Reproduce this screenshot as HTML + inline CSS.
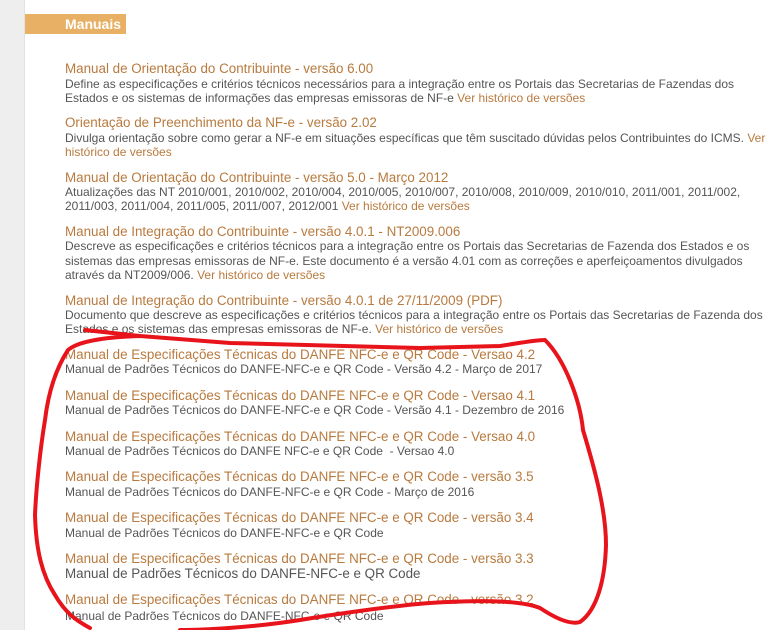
<!DOCTYPE html>
<html><head><meta charset="utf-8"><style>
body{margin:0;width:774px;height:630px;overflow:hidden;background:#fff;font-family:"Liberation Sans",Arial,sans-serif;position:relative}
.strip{position:absolute;left:0;top:0;width:24px;height:630px;background:#eeeeee;border-right:1px solid #e2e2e2}
.hdr{position:absolute;left:25px;top:14px;width:101px;height:20px;background:#e8b064;color:#fff;font-weight:bold;font-size:14px;line-height:20px;text-indent:40px}
.l{position:absolute;left:65px;white-space:nowrap;line-height:14px}
.t{font-size:13.4px;color:#b87a3e}
.d{font-size:12px;color:#555}
.d a,.a{color:#b87a3e}
</style></head><body>
<div class="strip"></div>
<div class="hdr">Manuais</div>
<div class="l t" style="top:62px">Manual de Orientação do Contribuinte - versão 6.00</div>
<div class="l d" style="top:77px">Define as especificações e critérios técnicos necessários para a integração entre os Portais das Secretarias de Fazendas dos</div>
<div class="l d" style="top:91px">Estados e os sistemas de informações das empresas emissoras de NF-e <a>Ver histórico de versões</a></div>

<div class="l t" style="top:116px">Orientação de Preenchimento da NF-e - versão 2.02</div>
<div class="l d" style="top:131px">Divulga orientação sobre como gerar a NF-e em situações específicas que têm suscitado dúvidas pelos Contribuintes do ICMS. <a>Ver</a></div>
<div class="l d" style="top:145px"><a>histórico de versões</a></div>

<div class="l t" style="top:171px">Manual de Orientação do Contribuinte - versão 5.0 - Março 2012</div>
<div class="l d" style="top:185px">Atualizações das NT 2010/001, 2010/002, 2010/004, 2010/005, 2010/007, 2010/008, 2010/009, 2010/010, 2011/001, 2011/002,</div>
<div class="l d" style="top:199px">2011/003, 2011/004, 2011/005, 2011/007, 2012/001 <a>Ver histórico de versões</a></div>

<div class="l t" style="top:225px">Manual de Integração do Contribuinte - versão 4.0.1 - NT2009.006</div>
<div class="l d" style="top:239px">Descreve as especificações e critérios técnicos para a integração entre os Portais das Secretarias de Fazenda dos Estados e os</div>
<div class="l d" style="top:254px">sistemas das empresas emissoras de NF-e. Este documento é a versão 4.01 com as correções e aperfeiçoamentos divulgados</div>
<div class="l d" style="top:268px">através da NT2009/006. <a>Ver histórico de versões</a></div>

<div class="l t" style="top:294px">Manual de Integração do Contribuinte - versão 4.0.1 de 27/11/2009 (PDF)</div>
<div class="l d" style="top:308px">Documento que descreve as especificações e critérios técnicos para a integração entre os Portais das Secretarias de Fazenda dos</div>
<div class="l d" style="top:322px">Estados e os sistemas das empresas emissoras de NF-e. <a>Ver histórico de versões</a></div>

<div class="l t" style="top:348px">Manual de Especificações Técnicas do DANFE NFC-e e QR Code - Versao 4.2</div>
<div class="l d" style="top:362px">Manual de Padrões Técnicos do DANFE-NFC-e e QR Code - Versão 4.2 - Março de 2017</div>
<div class="l t" style="top:389px">Manual de Especificações Técnicas do DANFE NFC-e e QR Code - Versao 4.1</div>
<div class="l d" style="top:403px">Manual de Padrões Técnicos do DANFE-NFC-e e QR Code - Versão 4.1 - Dezembro de 2016</div>
<div class="l t" style="top:430px">Manual de Especificações Técnicas do DANFE NFC-e e QR Code - Versao 4.0</div>
<div class="l d" style="top:444px">Manual de Padrões Técnicos do DANFE NFC-e e QR Code&nbsp; - Versao 4.0</div>
<div class="l t" style="top:470px">Manual de Especificações Técnicas do DANFE NFC-e e QR Code - versão 3.5</div>
<div class="l d" style="top:485px">Manual de Padrões Técnicos do DANFE-NFC-e e QR Code - Março de 2016</div>
<div class="l t" style="top:511px">Manual de Especificações Técnicas do DANFE NFC-e e QR Code - versão 3.4</div>
<div class="l d" style="top:526px">Manual de Padrões Técnicos do DANFE-NFC-e e QR Code</div>
<div class="l t" style="top:552px">Manual de Especificações Técnicas do DANFE NFC-e e QR Code - versão 3.3</div>
<div class="l d" style="top:567px;font-size:13.4px">Manual de Padrões Técnicos do DANFE-NFC-e e QR Code</div>
<div class="l t" style="top:593px">Manual de Especificações Técnicas do DANFE NFC-e e QR Code - versão 3.2</div>
<div class="l d" style="top:609px">Manual de Padrões Técnicos do DANFE-NFC-e e QR Code</div>

<svg style="position:absolute;left:0;top:0" width="774" height="630">
<path d="M85,330 L140,336 M140,336 C110,337 80,340 68,350 C55,370 48,395 45,420 C40,450 36,490 35,515 C36,550 42,575 55,595 C65,612 75,620 90,628 M140,336 L230,343 L420,348 L500,346 C520,343 535,340 545,340 C565,360 580,400 583,430 C595,470 606,510 606,545 C605,580 597,610 580,622 C570,625 555,618 540,608 C520,600 480,600 430,603 C390,606 330,615 300,620 C250,628 200,630 180,630" fill="none" stroke="#e8141c" stroke-width="4" stroke-linecap="round" stroke-linejoin="round"/>
</svg>
</body></html>
